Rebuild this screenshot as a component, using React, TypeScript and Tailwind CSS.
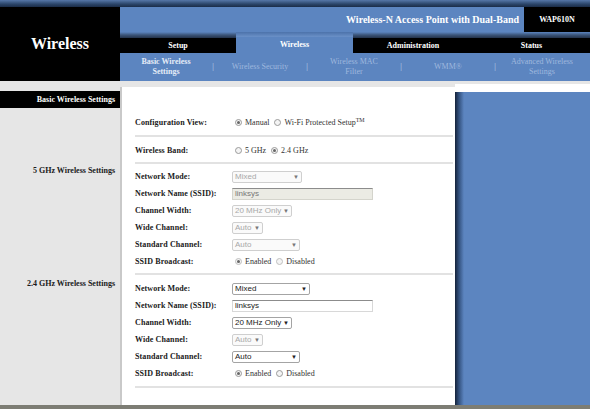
import React from 'react';

const serif = { fontFamily: '"Liberation Serif", "Times New Roman", serif' };

const Radio = ({ checked, dim }: { checked?: boolean; dim?: boolean }) => (
  <span
    className={`inline-flex items-center justify-center w-[7px] h-[7px] rounded-full border ${
      dim ? 'border-[#c0c0c0]' : 'border-[#9a9a9a]'
    } bg-[#f4f4f4] mr-[3px]`}
  >
    {checked && <span className="w-[3px] h-[3px] rounded-full bg-[#666]" />}
  </span>
);

const Select = ({ value, width, disabled }: { value: string; width: string; disabled?: boolean }) => (
  <div
    className={`${width} h-[12px] flex items-center justify-between pl-[2px] pr-[2px] rounded-[2px] border ${
      disabled ? 'border-[#cfcfcf] text-[#a8a8a8] bg-[#fafafa]' : 'border-[#a4a4a4] text-[#222] bg-white'
    } text-[8px] leading-none`}
    style={{ fontFamily: '"Liberation Sans", Arial, sans-serif' }}
  >
    <span>{value}</span>
    <span className={`text-[6px] ${disabled ? 'text-[#777]' : 'text-[#222]'}`}>▼</span>
  </div>
);

const TextInput = ({ value, disabled }: { value: string; disabled?: boolean }) => (
  <div
    className={`w-[141px] h-[12px] flex items-center pl-[2px] border border-t-[#8c8c8c] ${
      disabled ? 'bg-[#ebebe4] border-[#d4d4cc] text-[#777]' : 'bg-white border-[#d8d8d8] text-[#222]'
    } text-[8px] leading-none`}
    style={{ fontFamily: '"Liberation Sans", Arial, sans-serif' }}
  >
    {value}
  </div>
);

const Row = ({ label, children }: { label: string; children: React.ReactNode }) => (
  <div className="h-[17px] flex items-center">
    <div className="w-[97px] font-bold text-[8px] text-[#1a1a1a] tracking-[0.1px]">{label}</div>
    <div className="flex items-center text-[8px] text-[#333]">{children}</div>
  </div>
);

const Rule = ({ className }: { className: string }) => (
  <div className={`h-[2px] bg-[#e2e2e2] mr-[2px] ${className}`} />
);

const RadioPair = ({ a, b, first, dim }: { a: string; b: React.ReactNode; first: boolean; dim?: boolean }) => (
  <div className="flex items-center pl-[3px]">
    <Radio checked={first} dim={dim} />
    <span className="mr-[5px]">{a}</span>
    <Radio checked={!first} dim={dim} />
    <span>{b}</span>
  </div>
);

const BandSection = ({ disabled }: { disabled?: boolean }) => (
  <>
    <Row label="Network Mode:">
      <Select value="Mixed" width={disabled ? 'w-[70px]' : 'w-[78px]'} disabled={disabled} />
    </Row>
    <Row label="Network Name (SSID):">
      <TextInput value="linksys" disabled={disabled} />
    </Row>
    <Row label="Channel Width:">
      <Select value="20 MHz Only" width="w-[60px]" disabled={disabled} />
    </Row>
    <Row label="Wide Channel:">
      <Select value="Auto" width="w-[31px]" disabled />
    </Row>
    <Row label="Standard Channel:">
      <Select value="Auto" width="w-[68px]" disabled={disabled} />
    </Row>
    <Row label="SSID Broadcast:">
      <RadioPair a="Enabled" b="Disabled" first dim={disabled} />
    </Row>
  </>
);

const subnav = [
  { t: ['Basic Wireless', 'Settings'], active: true },
  { t: ['Wireless Security'] },
  { t: ['Wireless MAC', 'Filter'] },
  { t: ['WMM®'] },
  { t: ['Advanced Wireless', 'Settings'] },
];

export default function App() {
  return (
    <div className="w-[590px] h-[409px] overflow-hidden flex flex-col bg-[#e6e6e6]" style={serif}>
      <div className="h-[7px] bg-[linear-gradient(to_bottom,#5677a8,#2a4468_60%,#1b2c48)]" />
      <div className="flex h-[74px]">
        <div className="w-[120px] bg-black flex items-center justify-center text-white font-bold text-[16px]">
          Wireless
        </div>
        <div className="flex-1 flex flex-col bg-[#5c85c0]">
          <div className="h-[25px] flex items-center justify-end">
            <span className="text-white font-bold text-[10px] pr-[5px]">
              Wireless-N Access Point with Dual-Band
            </span>
            <div className="w-[66px] h-full bg-black flex items-center justify-center text-white font-bold text-[8px]">
              WAP610N
            </div>
          </div>
          <div className="h-[21px] flex text-white font-bold text-[8px]">
            <div className="w-[116px] flex flex-col">
              <div className="h-[6px] bg-[linear-gradient(to_bottom,#5c85c0,#3b5478_50%,#23324a)]" />
              <div className="flex-1 bg-black flex items-center justify-center">Setup</div>
            </div>
            <div className="w-[117px] flex flex-col">
              <div className="h-[5px] bg-[linear-gradient(to_bottom,#4c72aa,#6b91c8)]" />
              <div className="flex-1 flex items-center justify-center">Wireless</div>
            </div>
            <div className="flex-1 flex flex-col">
              <div className="h-[6px] bg-[linear-gradient(to_bottom,#5c85c0,#3b5478_50%,#23324a)]" />
              <div className="flex-1 bg-black flex">
                <div className="w-[120px] flex items-center justify-center">Administration</div>
                <div className="flex-1 flex items-center justify-center">Status</div>
              </div>
            </div>
          </div>
          <div className="flex-1 flex items-center pl-[7px] text-[8px] leading-[10px]">
            {subnav.map((s, i) => (
              <React.Fragment key={i}>
                {i > 0 && <div className="w-[16px] text-center text-[#c9d7ec]">|</div>}
                <div
                  className={`w-[78px] text-center ${
                    s.active ? 'text-[#e4ecf7] font-bold' : 'text-[#9fb8de]'
                  }`}
                >
                  {s.t.map((l) => (
                    <div key={l}>{l}</div>
                  ))}
                </div>
              </React.Fragment>
            ))}
          </div>
        </div>
      </div>

      <div className="flex flex-1">
        <div className="w-[120px] pt-[10px] flex flex-col text-[8px] font-bold">
          <div className="h-[17px] bg-black text-white flex items-center justify-end pr-[5px]">
            Basic Wireless Settings
          </div>
          <div className="h-[12px] mt-[57px] flex items-center justify-end pr-[5px] text-[#1a1a1a]">
            5 GHz Wireless Settings
          </div>
          <div className="h-[12px] mt-[101px] flex items-center justify-end pr-[5px] text-[#1a1a1a]">
            2.4 GHz Wireless Settings
          </div>
        </div>

        <div className="w-[335px] mt-[6px] bg-white border-l-2 border-[#c9c9c9] pl-[13px] pt-[27px] flex flex-col">
          <Row label="Configuration View:">
            <RadioPair
              a="Manual"
              b={
                <>
                  Wi-Fi Protected Setup<sup className="text-[6px]">TM</sup>
                </>
              }
              first
            />
          </Row>
          <Rule className="mt-[4px] mb-[5px]" />
          <Row label="Wireless Band:">
            <RadioPair a="5 GHz" b="2.4 GHz" first={false} />
          </Row>
          <Rule className="mt-[3px] mb-[4px]" />
          <BandSection disabled />
          <Rule className="mt-[3px] mb-[5px]" />
          <BandSection />
          <Rule className="mt-[4px]" />
        </div>

        <div className="flex-1 mt-[3px] bg-white pt-[8px] flex flex-col">
          <div className="flex-1 bg-[linear-gradient(to_right,#14223a,#33527f_4px,#5c85c0_9px)]" />
        </div>
      </div>
      <div className="h-[4px] bg-[#7d7d74]" />
    </div>
  );
}
